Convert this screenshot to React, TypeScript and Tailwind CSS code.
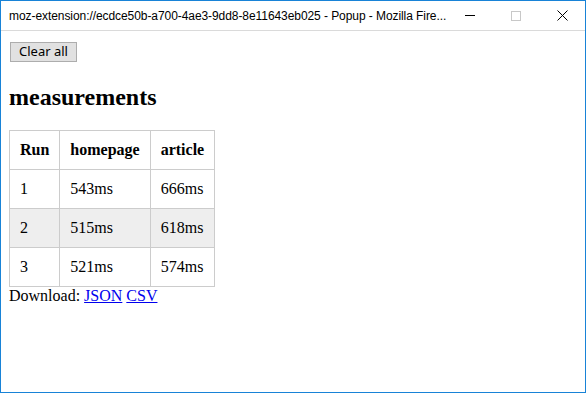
const rows = [
  { run: 1, homepage: "543ms", article: "666ms" },
  { run: 2, homepage: "515ms", article: "618ms" },
  { run: 3, homepage: "521ms", article: "574ms" },
];

export default function App() {
  return (
    <div className="flex h-[393px] w-[586px] flex-col border border-[#1883d7] bg-white">
      {/* window title bar */}
      <div className="flex h-[30px] shrink-0 items-center border-b border-[#dadada] pl-[8px] font-['Liberation_Sans',sans-serif] text-[12px] text-black">
        <span className="flex-1 overflow-hidden whitespace-nowrap tracking-[-0.07px]">
          moz-extension://ecdce50b-a700-4ae3-9dd8-8e11643eb025 - Popup - Mozilla Fire...
        </span>
        <div className="flex h-full items-center">
          <div className="flex h-full w-[46px] items-center justify-center">
            <div className="h-px w-[10px] bg-black" />
          </div>
          <div className="flex h-full w-[46px] items-center justify-center">
            <div className="h-[10px] w-[10px] border border-[#c8c8c8]" />
          </div>
          <div className="flex h-full w-[46px] items-center justify-center">
            <svg width="11" height="11" viewBox="0 0 11 11">
              <path d="M0.5 0.5 L10.5 10.5 M10.5 0.5 L0.5 10.5" stroke="black" strokeWidth="1" />
            </svg>
          </div>
        </div>
      </div>

      {/* popup body */}
      <div className="flex-1 p-[8px] font-['Liberation_Serif',serif] text-[16px] text-black">
        <button className="ml-px mt-px h-[20px] border border-[#adadad] bg-[#e1e1e1] px-[8px] font-['Noto_Sans',sans-serif] text-[13px] leading-none text-black">
          Clear all
        </button>
        <h2 className="mb-[19px] mt-[20px] text-[24px] font-bold leading-[28px]">measurements</h2>
        <table className="border-collapse">
          <thead>
            <tr>
              <th className="h-[39px] border border-[#cccccc] px-[10px] text-left font-bold">Run</th>
              <th className="h-[39px] border border-[#cccccc] px-[10px] text-left font-bold">homepage</th>
              <th className="h-[39px] border border-[#cccccc] px-[10px] text-left font-bold">article</th>
            </tr>
          </thead>
          <tbody>
            {rows.map((r, i) => (
              <tr key={r.run} className={i % 2 === 1 ? "bg-[#eeeeee]" : ""}>
                <td className="h-[39px] border border-[#cccccc] px-[10px]">{r.run}</td>
                <td className="h-[39px] border border-[#cccccc] px-[10px]">{r.homepage}</td>
                <td className="h-[39px] border border-[#cccccc] px-[10px]">{r.article}</td>
              </tr>
            ))}
          </tbody>
        </table>
        <div className="leading-[18px]">
          Download:{" "}
          <a href="#" className="text-[#0000ee] underline">JSON</a>{" "}
          <a href="#" className="text-[#0000ee] underline">CSV</a>
        </div>
      </div>
    </div>
  );
}
